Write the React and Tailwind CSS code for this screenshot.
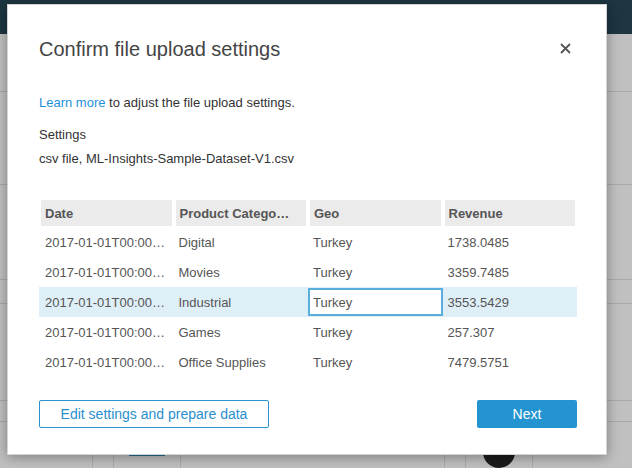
import React from 'react';

const rows = [
  { date: '2017-01-01T00:00…', category: 'Digital', geo: 'Turkey', revenue: '1738.0485' },
  { date: '2017-01-01T00:00…', category: 'Movies', geo: 'Turkey', revenue: '3359.7485' },
  { date: '2017-01-01T00:00…', category: 'Industrial', geo: 'Turkey', revenue: '3553.5429' },
  { date: '2017-01-01T00:00…', category: 'Games', geo: 'Turkey', revenue: '257.307' },
  { date: '2017-01-01T00:00…', category: 'Office Supplies', geo: 'Turkey', revenue: '7479.5751' },
];

const headers = ['Date', 'Product Catego…', 'Geo', 'Revenue'];

function Backdrop() {
  return (
    <div className="flex flex-col w-full h-full bg-[#c0c0c0]">
      <div className="h-[35px] bg-[#1d3641]" />
      <div className="h-[59px] border-b border-[#a9a9a9]" />
      <div className="h-[94px] border-b border-[#a9a9a9]" />
      <div className="h-[97px] border-b border-[#a9a9a9]" />
      <div className="h-[24px] border-b border-[#a9a9a9]" />
      <div className="h-[99px] border-b border-[#a9a9a9]" />
      <div className="h-[21px] border-b border-[#a9a9a9]" />
      <div className="flex-1 flex">
        <div className="w-[93px] border-r border-[#a9a9a9]" />
        <div className="w-[21px] border-r border-[#a9a9a9]" />
        <div className="w-[67px] border-r border-[#a9a9a9] flex justify-center pt-[14px]">
          <svg width="40" height="20" viewBox="0 0 40 20">
            <path d="M2 8 H12 A5 5 0 0 1 22 8 H26 A5 5 0 0 1 36 8 H38 V20 H2 Z" fill="#1f6a8a" />
          </svg>
        </div>
        <div className="w-[264px] border-r border-[#a9a9a9]" />
        <div className="w-[21px] border-r border-[#a9a9a9]" />
        <div className="w-[67px] border-r border-[#a9a9a9] flex justify-center pt-[14px]">
          <div className="w-[32px] h-[32px] rounded-full bg-[#1b1b1b]" />
        </div>
        <div className="flex-1" />
      </div>
    </div>
  );
}

export default function App() {
  return (
    <div
      className="relative w-[632px] h-[468px] overflow-hidden"
      style={{ fontFamily: '"Liberation Sans", Arial, sans-serif' }}
    >
      <Backdrop />

      {/* MODAL */}
      <div className="absolute left-[7px] top-[4px] w-[600px] h-[451px] bg-white border border-[#d4d4d4] shadow-[0_2px_12px_rgba(0,0,0,0.35)] pt-[32px] pl-[31px] pr-[29px]">
        <div className="flex items-center justify-between h-[24px]">
          <h1 className="text-[20px] leading-[24px] text-[#444]">Confirm file upload settings</h1>
          <svg width="11" height="11" viewBox="0 0 11 11" className="mr-[6px] -mt-[2px]">
            <path d="M1 1 L10 10 M10 1 L1 10" stroke="#555" strokeWidth="1.8" />
          </svg>
        </div>

        <p className="mt-[33px] text-[13px] leading-[18px] text-[#333]">
          <span className="text-[#1f8fd6]">Learn more</span> to adjust the file upload settings.
        </p>
        <p className="mt-[14px] text-[13px] leading-[18px] text-[#333]">Settings</p>
        <p className="mt-[6px] text-[13px] leading-[18px] text-[#333]">csv file, ML-Insights-Sample-Dataset-V1.csv</p>

        {/* TABLE */}
        <div className="mt-[32px] w-[538px] text-[13px] text-[#555]">
          <div className="grid grid-cols-4 h-[26px] mb-[1px]">
            {headers.map((h) => (
              <div key={h} className="mx-[2px] bg-[#ebebeb] px-[4px] pt-[1px] flex items-center font-bold whitespace-nowrap">
                {h}
              </div>
            ))}
          </div>
          {rows.map((r, i) => (
            <div key={i} className={`grid grid-cols-4 h-[30px] ${i === 2 ? 'bg-[#dfeff7]' : ''}`}>
              <div className="px-[6px] pt-[1px] flex items-center whitespace-nowrap">{r.date}</div>
              <div className="px-[5px] pt-[1px] flex items-center whitespace-nowrap">{r.category}</div>
              {i === 2 ? (
                <div className="flex items-center">
                  <div className="w-full h-[28px] border-2 border-[#5aaedc] bg-white px-[3px] pt-[1px] flex items-center">
                    {r.geo}
                  </div>
                </div>
              ) : (
                <div className="px-[5px] pt-[1px] flex items-center">{r.geo}</div>
              )}
              <div className="px-[5px] pt-[1px] flex items-center">{r.revenue}</div>
            </div>
          ))}
        </div>

        {/* BUTTONS */}
        <div className="mt-[23px] flex justify-between w-[538px]">
          <button className="w-[230px] h-[28px] border border-[#2a92cf] rounded-[2px] text-[14px] text-[#2a8fcd] bg-white">
            Edit settings and prepare data
          </button>
          <button className="w-[100px] h-[28px] rounded-[2px] bg-[#2494d1] text-[14px] text-white">
            Next
          </button>
        </div>
      </div>
    </div>
  );
}
